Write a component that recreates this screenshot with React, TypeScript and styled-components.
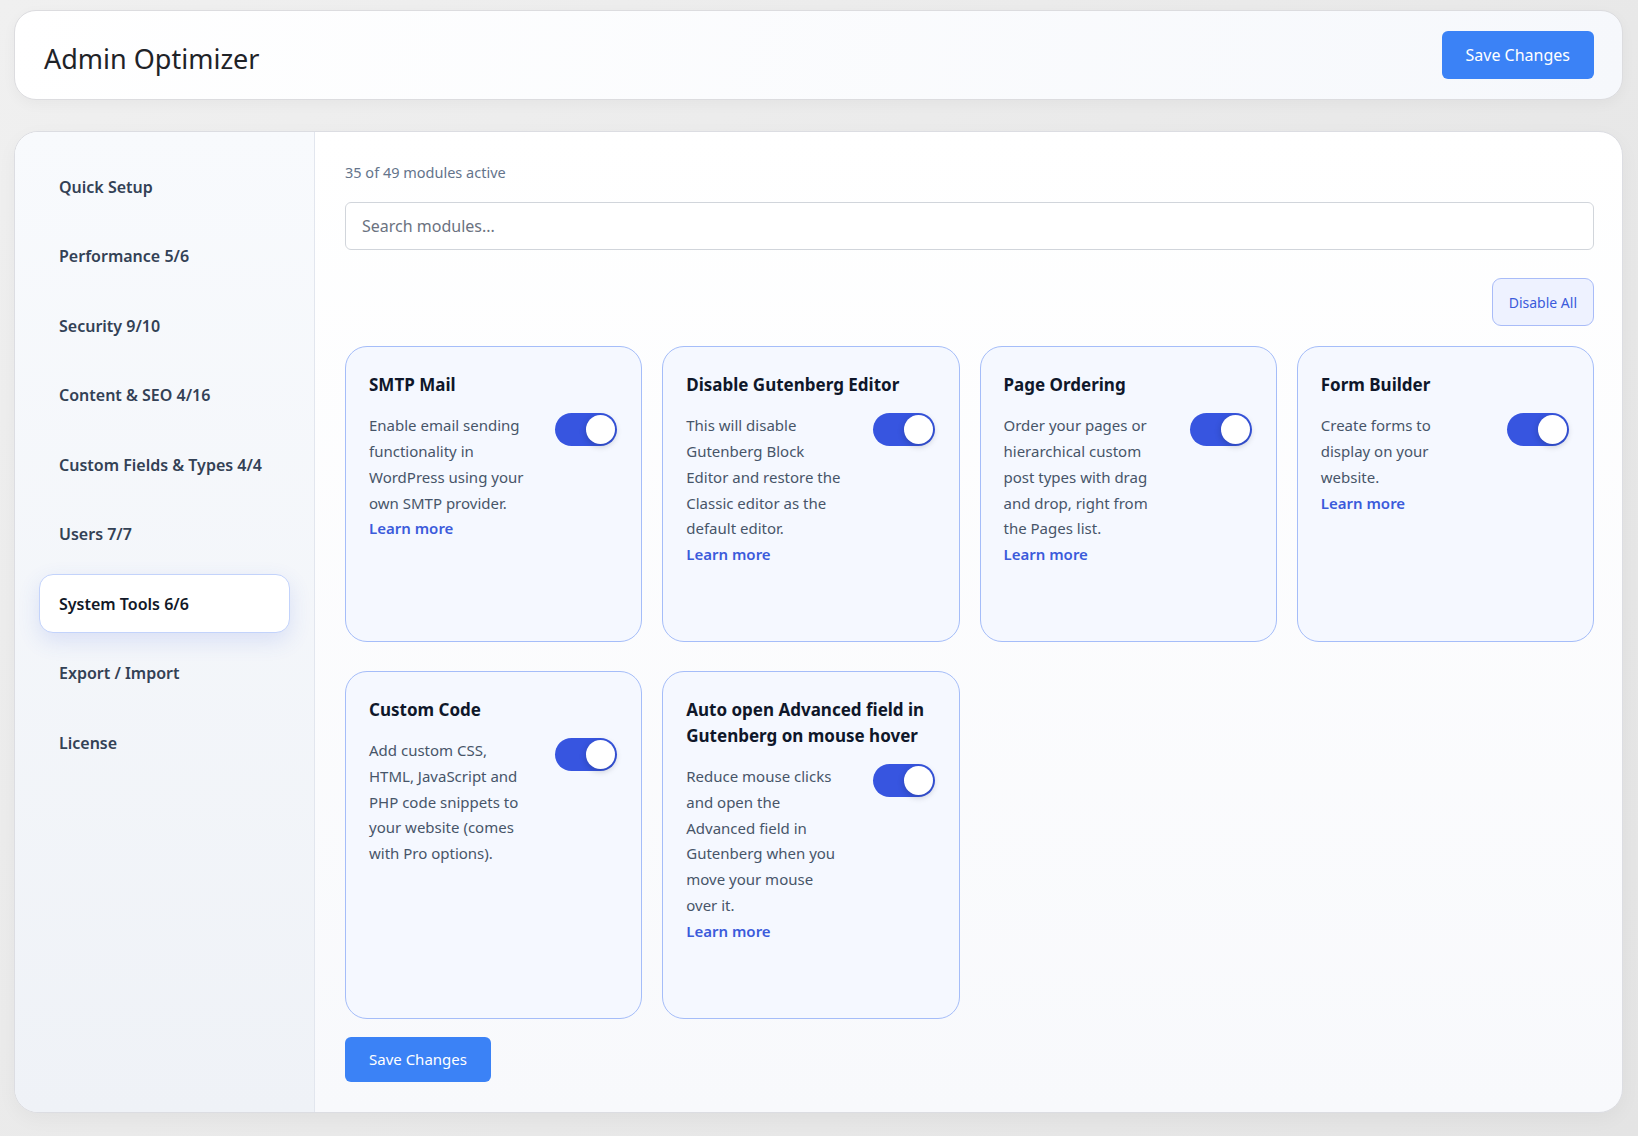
import React from 'react'
import styled, { createGlobalStyle } from 'styled-components'

const GlobalStyle = createGlobalStyle`
  * { box-sizing: border-box; }
  html, body { margin: 0; padding: 0; }
  body {
    font-family: "Noto Sans", "Open Sans", sans-serif;
    background: linear-gradient(135deg, #f0f0f0 0%, #e8e8e8 60%, #e4e4e4 100%);
    min-height: 1136px;
    color: #1e293b;
  }
`

type Module = {
  title: string
  desc: string
  link?: boolean
}

const modules: Module[] = [
  { title: 'SMTP Mail', desc: 'Enable email sending functionality in WordPress using your own SMTP provider.', link: true },
  { title: 'Disable Gutenberg Editor', desc: 'This will disable Gutenberg Block Editor and restore the Classic editor as the default editor.', link: true },
  { title: 'Page Ordering', desc: 'Order your pages or hierarchical custom post types with drag and drop, right from the Pages list.', link: true },
  { title: 'Form Builder', desc: 'Create forms to display on your website.', link: true },
  { title: 'Custom Code', desc: 'Add custom CSS, HTML, JavaScript and PHP code snippets to your website (comes with Pro options).' },
  { title: 'Auto open Advanced field in Gutenberg on mouse hover', desc: 'Reduce mouse clicks and open the Advanced field in Gutenberg when you move your mouse over it.', link: true },
]

const navItems = [
  'Quick Setup',
  'Performance 5/6',
  'Security 9/10',
  'Content & SEO 4/16',
  'Custom Fields & Types 4/4',
  'Users 7/7',
  'System Tools 6/6',
  'Export / Import',
  'License',
]

const App = () => {
  return (
    <Page>
      <GlobalStyle />
      <Header>
        <Title>Admin Optimizer</Title>
        <PrimaryButton>Save Changes</PrimaryButton>
      </Header>
      <Main>
        <Sidebar>
          {navItems.map((n) => (
            <NavItem key={n} $active={n === 'System Tools 6/6'}>{n}</NavItem>
          ))}
        </Sidebar>
        <Content>
          <Count>35 of 49 modules active</Count>
          <Search type="search" placeholder="Search modules..." />
          <Actions>
            <GhostButton>Disable All</GhostButton>
          </Actions>
          <Grid>
            {modules.map((m) => (
              <Card key={m.title}>
                <CardTitle>{m.title}</CardTitle>
                <CardBody>
                  <Desc>
                    {m.desc}
                    {m.link && <LearnMore href="#">Learn more</LearnMore>}
                  </Desc>
                  <Toggle>
                    <Knob />
                  </Toggle>
                </CardBody>
              </Card>
            ))}
          </Grid>
          <BottomButton>Save Changes</BottomButton>
        </Content>
      </Main>
    </Page>
  )
}

export default App

const Page = styled.div`
  padding: 10px 15px 23px 14px;
  display: flex;
  flex-direction: column;
  gap: 31px;
`
const Header = styled.header`
  height: 90px;
  border-radius: 22px;
  border: 1px solid #dcdcdf;
  background: linear-gradient(100deg, #ffffff 0%, #f6f8fc 100%);
  box-shadow: 0 4px 14px rgba(0, 0, 0, 0.04);
  display: flex;
  align-items: center;
  justify-content: space-between;
  padding: 0 28px 0 29px;
`
const Title = styled.h1`
  margin: 6px 0 0 0;
  font-size: 27px;
  font-weight: 400;
  color: #1f2328;
`
const PrimaryButton = styled.button`
  height: 48px;
  padding: 0 24px;
  border: none;
  border-radius: 6px;
  background: #3b82f6;
  color: #fff;
  font-family: "Noto Sans", sans-serif;
  font-size: 16px;
`
const BottomButton = styled(PrimaryButton)`
  align-self: flex-start;
  height: 47px;
  font-size: 15px;
  margin-top: 18px;
`
const Main = styled.div`
  height: 982px;
  display: flex;
  border-radius: 24px;
  border: 1px solid #dcdde2;
  overflow: hidden;
  background: linear-gradient(180deg, #ffffff 0%, #f8f9fc 100%);
  box-shadow: 0 6px 20px rgba(0, 0, 0, 0.04);
`
const Sidebar = styled.nav`
  width: 300px;
  flex-shrink: 0;
  border-right: 1px solid #e2e6ee;
  background: linear-gradient(180deg, #f8fafd 0%, #eff2f7 100%);
  padding: 25px 24px;
  display: flex;
  flex-direction: column;
  gap: 10.5px;
`
const NavItem = styled.div<{ $active?: boolean }>`
  height: 59px;
  display: flex;
  align-items: center;
  padding-left: 19px;
  border-radius: 14px;
  font-size: 16px;
  font-weight: 600;
  color: ${(p) => (p.$active ? '#111827' : '#334155')};
  background: ${(p) => (p.$active ? '#ffffff' : 'transparent')};
  border: 1px solid ${(p) => (p.$active ? '#c3d3fb' : 'transparent')};
  box-shadow: ${(p) => (p.$active ? '0 8px 22px rgba(59, 91, 219, 0.14)' : 'none')};
`
const Content = styled.section`
  flex: 1;
  display: flex;
  flex-direction: column;
  padding: 30px 28px 30px 30px;
`
const Count = styled.div`
  font-size: 14.5px;
  line-height: 20px;
  color: #64748b;
`
const Search = styled.input`
  margin-top: 20px;
  height: 50px;
  border: 1px solid #d1d5db;
  border-radius: 6px;
  background: #fff;
  padding: 0 16px;
  font-family: "Noto Sans", sans-serif;
  font-size: 16px;
  color: #1f2937;
  outline: none;
  &::placeholder { color: #6b7280; }
`
const Actions = styled.div`
  margin-top: 28px;
  display: flex;
  justify-content: flex-end;
`
const GhostButton = styled.button`
  height: 48px;
  padding: 0 16px;
  border: 1px solid #a9bcf8;
  border-radius: 9px;
  background: #eef2ff;
  color: #3b5bdb;
  font-family: "Noto Sans", sans-serif;
  font-size: 14px;
`
const Grid = styled.div`
  margin-top: 20px;
  display: grid;
  grid-template-columns: repeat(4, 1fr);
  column-gap: 20px;
  row-gap: 29px;
`
const Card = styled.div`
  border: 1px solid #a5bdf9;
  border-radius: 22px;
  background: #f5f8ff;
  padding: 25px 24px 73px 23px;
`
const CardTitle = styled.h3`
  margin: 0;
  font-size: 17px;
  line-height: 26px;
  font-weight: 700;
  color: #0f172a;
`
const CardBody = styled.div`
  margin-top: 15px;
  display: flex;
  align-items: flex-start;
  gap: 28px;
`
const Desc = styled.p`
  margin: 0;
  flex: 1;
  font-size: 15px;
  line-height: 25.8px;
  color: #475569;
`
const LearnMore = styled.a`
  display: block;
  color: #3b5bdb;
  font-weight: 600;
  text-decoration: none;
`
const Toggle = styled.div`
  position: relative;
  width: 62px;
  height: 33px;
  flex-shrink: 0;
  border-radius: 17px;
  background: #3755e0;
`
const Knob = styled.span`
  position: absolute;
  top: 2px;
  right: 2px;
  width: 29px;
  height: 29px;
  border-radius: 50%;
  background: #fff;
  box-shadow: 0 2px 6px rgba(15, 23, 42, 0.25);
`
